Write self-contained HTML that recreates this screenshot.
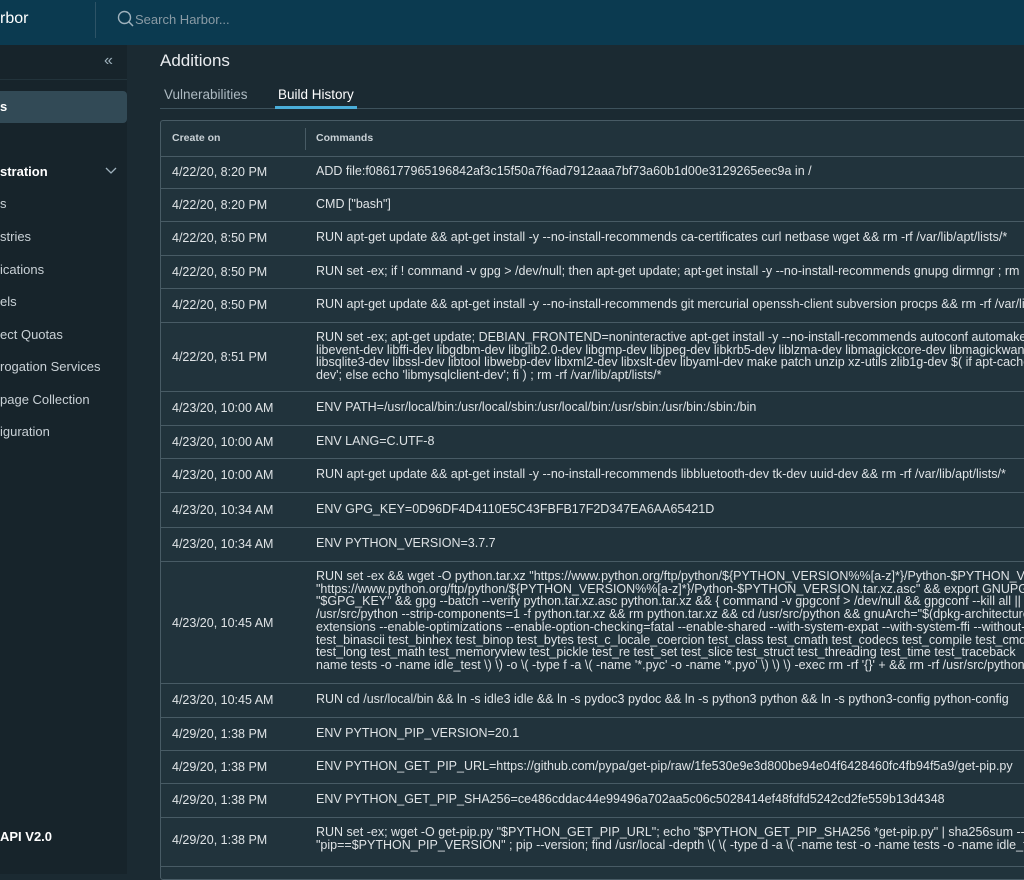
<!DOCTYPE html>
<html><head><meta charset="utf-8"><style>
*{box-sizing:border-box;margin:0;padding:0}
body{width:1024px;height:874px;overflow:hidden;background:#1b2a32;font-family:"Liberation Sans",sans-serif;color:#e9ecef;position:relative}
.hdr{position:absolute;left:0;top:0;width:1024px;height:45px;background:#0b3a50}
.side{position:absolute;left:0;top:45px;width:127px;height:829px;background:#17242b}
.main{position:absolute;left:127px;top:45px;width:897px;height:829px;background:#1b2a32}
.a{position:absolute;white-space:nowrap}
.tbl{position:absolute;left:160px;top:120px;width:900px;height:760px;border:1px solid #485b65;border-radius:3px;background:#21333c;overflow:hidden}
.row{position:absolute;left:0;width:900px;border-top:1px solid #485b65;font-size:12.5px;color:#dfe3e6}
.row .d{position:absolute;left:11px}
.row .c{position:absolute;left:155px;white-space:pre;line-height:12.7px}
.sn{position:absolute;left:0;font-size:13px;color:#c9d1d6}
</style></head><body>
<div class="hdr"></div>
<div class="a" style="left:0;top:10px;font-size:16px;color:#fff">rbor</div>
<div style="position:absolute;left:95px;top:2px;width:1px;height:36px;background:#2d5366"></div>
<svg class="a" style="left:117px;top:10px" width="18" height="18" viewBox="0 0 18 18"><circle cx="7.5" cy="7.5" r="6" fill="none" stroke="#9fb2bd" stroke-width="1.4"/><line x1="12" y1="12" x2="16" y2="16" stroke="#9fb2bd" stroke-width="1.5"/></svg>
<div class="a" style="left:135px;top:12px;font-size:13px;color:#8a9ba5">Search Harbor...</div>
<div class="side"></div>
<div class="a" style="left:104px;top:52px;font-size:16px;color:#9fb2bd">«</div>
<div style="position:absolute;left:0;top:79px;width:127px;height:1px;background:#22333b"></div>
<div style="position:absolute;left:0;top:91px;width:127px;height:32px;background:#324a56;border-radius:0 4px 4px 0"></div>
<div class="sn" style="top:99px;font-weight:bold;color:#fff">s</div>
<div class="sn" style="top:164px;font-weight:bold;color:#fff">stration</div>
<svg class="a" style="left:105px;top:167px" width="12" height="8" viewBox="0 0 12 8"><path d="M1 1l5 5 5-5" fill="none" stroke="#9fb2bd" stroke-width="1.3"/></svg>
<div class="sn" style="top:196px">s</div>
<div class="sn" style="top:229px">stries</div>
<div class="sn" style="top:262px">ications</div>
<div class="sn" style="top:294px">els</div>
<div class="sn" style="top:327px">ect Quotas</div>
<div class="sn" style="top:359px">rogation Services</div>
<div class="sn" style="top:392px">page Collection</div>
<div class="sn" style="top:424px">iguration</div>
<div class="sn" style="top:829px;font-weight:bold;color:#fff">API V2.0</div>
<div class="main"></div>
<div class="a" style="left:160px;top:51px;font-size:17px;color:#e9ecef">Additions</div>
<div class="a" style="left:164px;top:87px;font-size:13.5px;color:#aebbc3">Vulnerabilities</div>
<div class="a" style="left:278px;top:87px;font-size:13.5px;color:#fff">Build History</div>
<div style="position:absolute;left:160px;top:108px;width:864px;height:1px;background:#3e525c"></div>
<div style="position:absolute;left:275px;top:106px;width:82px;height:3px;background:#4aaed9"></div>
<div class="tbl">
<div class="a" style="left:11px;top:11px;font-size:10.5px;font-weight:bold;color:#c9d1d6">Create on</div>
<div style="position:absolute;left:144px;top:7px;width:1px;height:22px;background:#485b65"></div>
<div class="a" style="left:155px;top:11px;font-size:10.5px;font-weight:bold;color:#c9d1d6">Commands</div>
<div class="row" style="top:35px;height:32px"><span class="d" style="top:8px">4/22/20, 8:20 PM</span><span class="c" style="top:8px">ADD file:f086177965196842af3c15f50a7f6ad7912aaa7bf73a60b1d00e3129265eec9a in /</span></div>
<div class="row" style="top:67px;height:33px"><span class="d" style="top:9px">4/22/20, 8:20 PM</span><span class="c" style="top:9px">CMD ["bash"]</span></div>
<div class="row" style="top:100px;height:34px"><span class="d" style="top:9px">4/22/20, 8:50 PM</span><span class="c" style="top:9px">RUN apt-get update &amp;&amp; apt-get install -y --no-install-recommends ca-certificates curl netbase wget &amp;&amp; rm -rf /var/lib/apt/lists/*</span></div>
<div class="row" style="top:134px;height:33px"><span class="d" style="top:9px">4/22/20, 8:50 PM</span><span class="c" style="top:9px">RUN set -ex; if ! command -v gpg &gt; /dev/null; then apt-get update; apt-get install -y --no-install-recommends gnupg dirmngr ; rm</span></div>
<div class="row" style="top:167px;height:34px"><span class="d" style="top:9px">4/22/20, 8:50 PM</span><span class="c" style="top:9px">RUN apt-get update &amp;&amp; apt-get install -y --no-install-recommends git mercurial openssh-client subversion procps &amp;&amp; rm -rf /var/lib</span></div>
<div class="row" style="top:201px;height:69px"><span class="d" style="top:27px">4/22/20, 8:51 PM</span><span class="c" style="top:8px">RUN set -ex; apt-get update; DEBIAN_FRONTEND=noninteractive apt-get install -y --no-install-recommends autoconf automake
libevent-dev libffi-dev libgdbm-dev libglib2.0-dev libgmp-dev libjpeg-dev libkrb5-dev liblzma-dev libmagickcore-dev libmagickwand
libsqlite3-dev libssl-dev libtool libwebp-dev libxml2-dev libxslt-dev libyaml-dev make patch unzip xz-utils zlib1g-dev $( if apt-cache
dev'; else echo 'libmysqlclient-dev'; fi ) ; rm -rf /var/lib/apt/lists/*</span></div>
<div class="row" style="top:270px;height:34px"><span class="d" style="top:9px">4/23/20, 10:00 AM</span><span class="c" style="top:9px">ENV PATH=/usr/local/bin:/usr/local/sbin:/usr/local/bin:/usr/sbin:/usr/bin:/sbin:/bin</span></div>
<div class="row" style="top:304px;height:33px"><span class="d" style="top:9px">4/23/20, 10:00 AM</span><span class="c" style="top:9px">ENV LANG=C.UTF-8</span></div>
<div class="row" style="top:337px;height:34px"><span class="d" style="top:9px">4/23/20, 10:00 AM</span><span class="c" style="top:9px">RUN apt-get update &amp;&amp; apt-get install -y --no-install-recommends libbluetooth-dev tk-dev uuid-dev &amp;&amp; rm -rf /var/lib/apt/lists/*</span></div>
<div class="row" style="top:371px;height:35px"><span class="d" style="top:10px">4/23/20, 10:34 AM</span><span class="c" style="top:10px">ENV GPG_KEY=0D96DF4D4110E5C43FBFB17F2D347EA6AA65421D</span></div>
<div class="row" style="top:406px;height:34px"><span class="d" style="top:9px">4/23/20, 10:34 AM</span><span class="c" style="top:9px">ENV PYTHON_VERSION=3.7.7</span></div>
<div class="row" style="top:440px;height:122px"><span class="d" style="top:54px">4/23/20, 10:45 AM</span><span class="c" style="top:8px">RUN set -ex &amp;&amp; wget -O python.tar.xz "https://www.python.org/ftp/python/${PYTHON_VERSION%%[a-z]*}/Python-$PYTHON_VERSION.tar.xz"
"https://www.python.org/ftp/python/${PYTHON_VERSION%%[a-z]*}/Python-$PYTHON_VERSION.tar.xz.asc" &amp;&amp; export GNUPGHOME
"$GPG_KEY" &amp;&amp; gpg --batch --verify python.tar.xz.asc python.tar.xz &amp;&amp; { command -v gpgconf &gt; /dev/null &amp;&amp; gpgconf --kill all ||
/usr/src/python --strip-components=1 -f python.tar.xz &amp;&amp; rm python.tar.xz &amp;&amp; cd /usr/src/python &amp;&amp; gnuArch="$(dpkg-architecture
extensions --enable-optimizations --enable-option-checking=fatal --enable-shared --with-system-expat --with-system-ffi --without-
test_binascii test_binhex test_binop test_bytes test_c_locale_coercion test_class test_cmath test_codecs test_compile test_cmd
test_long test_math test_memoryview test_pickle test_re test_set test_slice test_struct test_threading test_time test_traceback
name tests -o -name idle_test \) \) -o \( -type f -a \( -name '*.pyc' -o -name '*.pyo' \) \) \) -exec rm -rf '{}' + &amp;&amp; rm -rf /usr/src/python</span></div>
<div class="row" style="top:562px;height:34px"><span class="d" style="top:9px">4/23/20, 10:45 AM</span><span class="c" style="top:9px">RUN cd /usr/local/bin &amp;&amp; ln -s idle3 idle &amp;&amp; ln -s pydoc3 pydoc &amp;&amp; ln -s python3 python &amp;&amp; ln -s python3-config python-config</span></div>
<div class="row" style="top:596px;height:33px"><span class="d" style="top:9px">4/29/20, 1:38 PM</span><span class="c" style="top:9px">ENV PYTHON_PIP_VERSION=20.1</span></div>
<div class="row" style="top:629px;height:33px"><span class="d" style="top:9px">4/29/20, 1:38 PM</span><span class="c" style="top:9px">ENV PYTHON_GET_PIP_URL=https://github.com/pypa/get-pip/raw/1fe530e9e3d800be94e04f6428460fc4fb94f5a9/get-pip.py</span></div>
<div class="row" style="top:662px;height:34px"><span class="d" style="top:9px">4/29/20, 1:38 PM</span><span class="c" style="top:9px">ENV PYTHON_GET_PIP_SHA256=ce486cddac44e99496a702aa5c06c5028414ef48fdfd5242cd2fe559b13d4348</span></div>
<div class="row" style="top:696px;height:49px"><span class="d" style="top:15px">4/29/20, 1:38 PM</span><span class="c" style="top:8px">RUN set -ex; wget -O get-pip.py "$PYTHON_GET_PIP_URL"; echo "$PYTHON_GET_PIP_SHA256 *get-pip.py" | sha256sum --check
"pip==$PYTHON_PIP_VERSION" ; pip --version; find /usr/local -depth \( \( -type d -a \( -name test -o -name tests -o -name idle_test</span></div>
<div class="row" style="top:745px;height:40px"></div>
</div>
</body></html>
